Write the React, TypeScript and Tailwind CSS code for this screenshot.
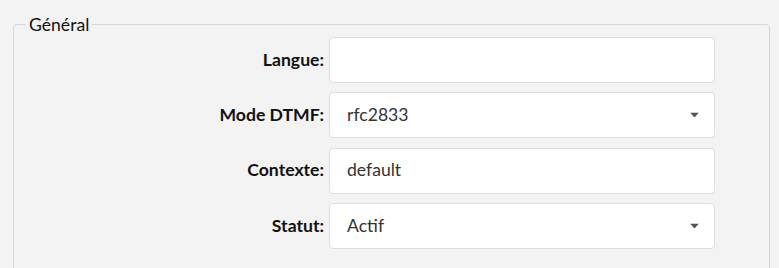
import React from "react";

const Caret = () => (
  <svg width="9" height="5" viewBox="0 0 9 5" className="absolute right-[15px] top-1/2 -translate-y-1/2">
    <path d="M0 0 H9 L4.5 5 Z" fill="#555" />
  </svg>
);

type RowProps = { label: string; value?: string; select?: boolean };

const Row = ({ label, value, select }: RowProps) => (
  <div className="flex items-center h-[46px]">
    <label className="w-[303px] text-right pr-[5px] font-bold text-[17.6px] text-[#111]">{label}</label>
    <div className="relative w-[386px] h-full bg-white border border-[#dedede] rounded-[4px] flex items-center pl-[17px] text-[17.6px] text-[#333]">
      {value}
      {select && <Caret />}
    </div>
  </div>
);

export default function App() {
  return (
    <div className="min-h-screen bg-[#f3f3f3] pl-[13px] pr-[9px] pt-[12px]" style={{ fontFamily: "Lato, 'Noto Sans', sans-serif" }}>
      <fieldset className="border border-[#d6d6d6] rounded-[4px] pl-[12px] pb-[30px]">
        <legend className="px-[3px] text-[17.6px] leading-[25px] text-[#111]">Général</legend>
        <div className="flex flex-col gap-[9.3px]">
          <Row label="Langue:" />
          <Row label="Mode DTMF:" value="rfc2833" select />
          <Row label="Contexte:" value="default" />
          <Row label="Statut:" value="Actif" select />
        </div>
      </fieldset>
    </div>
  );
}
